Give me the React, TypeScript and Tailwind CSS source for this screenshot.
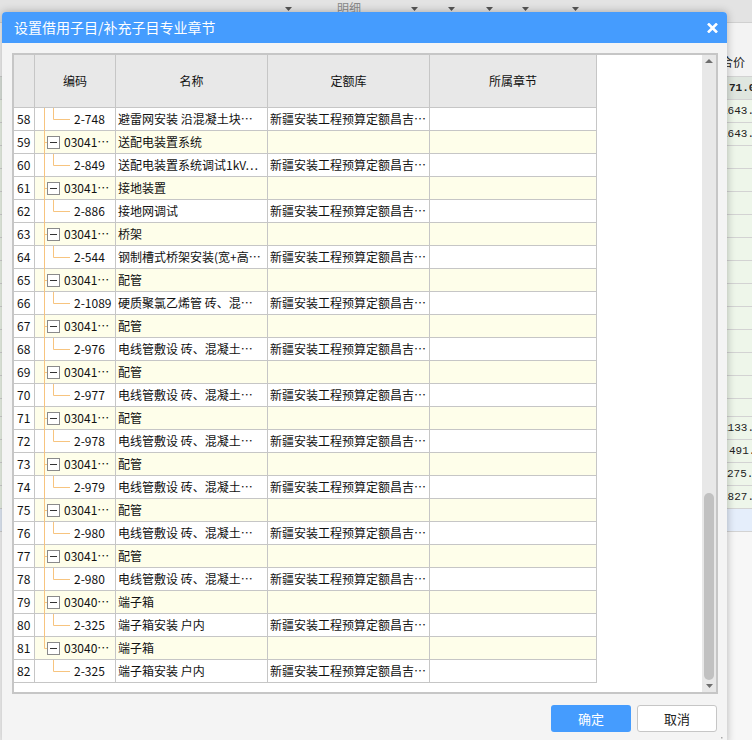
import React from "react";

// tree connector colour used by the grid
const ORANGE = "#f7c47f";
const LIB = "新疆安装工程预算定额昌吉…";

type Row = { n: number; leaf: boolean; code: string; name: string };

const rows: Row[] = [
    { n: 58, leaf: true, code: "2-748", name: "避雷网安装 沿混凝土块…" },
    { n: 59, leaf: false, code: "03041…", name: "送配电装置系统" },
    { n: 60, leaf: true, code: "2-849", name: "送配电装置系统调试1kV…" },
    { n: 61, leaf: false, code: "03041…", name: "接地装置" },
    { n: 62, leaf: true, code: "2-886", name: "接地网调试" },
    { n: 63, leaf: false, code: "03041…", name: "桥架" },
    { n: 64, leaf: true, code: "2-544", name: "钢制槽式桥架安装(宽+高…" },
    { n: 65, leaf: false, code: "03041…", name: "配管" },
    { n: 66, leaf: true, code: "2-1089", name: "硬质聚氯乙烯管 砖、混…" },
    { n: 67, leaf: false, code: "03041…", name: "配管" },
    { n: 68, leaf: true, code: "2-976", name: "电线管敷设 砖、混凝土…" },
    { n: 69, leaf: false, code: "03041…", name: "配管" },
    { n: 70, leaf: true, code: "2-977", name: "电线管敷设 砖、混凝土…" },
    { n: 71, leaf: false, code: "03041…", name: "配管" },
    { n: 72, leaf: true, code: "2-978", name: "电线管敷设 砖、混凝土…" },
    { n: 73, leaf: false, code: "03041…", name: "配管" },
    { n: 74, leaf: true, code: "2-979", name: "电线管敷设 砖、混凝土…" },
    { n: 75, leaf: false, code: "03041…", name: "配管" },
    { n: 76, leaf: true, code: "2-980", name: "电线管敷设 砖、混凝土…" },
    { n: 77, leaf: false, code: "03041…", name: "配管" },
    { n: 78, leaf: true, code: "2-980", name: "电线管敷设 砖、混凝土…" },
    { n: 79, leaf: false, code: "03040…", name: "端子箱" },
    { n: 80, leaf: true, code: "2-325", name: "端子箱安装 户内" },
    { n: 81, leaf: false, code: "03040…", name: "端子箱" },
    { n: 82, leaf: true, code: "2-325", name: "端子箱安装 户内" },
];

// rows of the page behind the dialog (only the right strip shows)
const bgRows = [
    { v: "71.00", pad: "ml-[729px] font-bold", bg: "bg-[#dfe6df]", h: "h-[23px]" },
    { v: "1643.80", pad: "ml-[721px]", bg: "bg-[#eef6ea]", h: "h-[23px]" },
    { v: "1643.80", pad: "ml-[721px]", bg: "bg-[#eef6ea]", h: "h-[23px]" },
    ...Array.from({ length: 11 }, () => ({ v: "", pad: "", bg: "bg-[#eef6ea]", h: "h-[23px]" })),
    { v: "", pad: "", bg: "bg-[#eef6ea]", h: "h-[18px]" },
    { v: "1133.00", pad: "ml-[721px]", bg: "bg-[#eef6ea]", h: "h-[23px]" },
    { v: "491.00", pad: "ml-[729px]", bg: "bg-[#eef6ea]", h: "h-[23px]" },
    { v: "275.30", pad: "ml-[727px]", bg: "bg-[#eef6ea]", h: "h-[23px]" },
    { v: "1827.50", pad: "ml-[721px]", bg: "bg-[#eef6ea]", h: "h-[23px]" },
    { v: "", pad: "", bg: "bg-[#e5eefb]", h: "h-[23px]" },
];

function TriDown({ color = "#555" }: { color?: string }) {
    return (
        <svg width="7" height="4" viewBox="0 0 7 4" className="block">
            <path d="M0 0H7L3.5 4Z" fill={color} />
        </svg>
    );
}

function TriUp({ color = "#6e6e6e" }: { color?: string }) {
    return (
        <svg width="8" height="4" viewBox="0 0 8 4" className="block">
            <path d="M0 4H8L4 0Z" fill={color} />
        </svg>
    );
}

function Tree({ leaf, trunk }: { leaf: boolean; trunk: "full" | "half" | "none" }) {
    return (
        <svg width={leaf ? 39 : 29} height="22" className="shrink-0 block" overflow="visible">
            {trunk !== "none" && (
                <line x1="9.5" y1="0" x2="9.5" y2={trunk === "full" ? 23 : 11.5} stroke={ORANGE} />
            )}
            {leaf ? (
                <path d="M18.5 0V11.5H35" fill="none" stroke={ORANGE} />
            ) : (
                <>
                    <line x1="9.5" y1="11.5" x2="12" y2="11.5" stroke={ORANGE} />
                    <rect x="12.5" y="5.5" width="12" height="12" fill="#fff" stroke="#8a8a8a" />
                    <line x1="15" y1="11.5" x2="22" y2="11.5" stroke="#333" />
                </>
            )}
        </svg>
    );
}

export default function App() {
    return (
        <div className="relative w-[752px] h-[740px] overflow-hidden bg-[#f6f6f6] font-['Noto_Sans_CJK_SC',sans-serif]">
            {/* --- Page behind the dialog --- */}
            <div className="flex flex-col w-full h-full">
                <div className="h-[23px] shrink-0 bg-[#e3e3e3] border-b border-[#d0d0d0] flex items-start text-[12px] text-[#8a8a8a]">
                    <span className="ml-[285px] mt-[7px]"><TriDown /></span>
                    <span className="ml-[45px] leading-[14px] mt-[1px] whitespace-nowrap">明细</span>
                    <span className="ml-[50px] mt-[7px]"><TriDown /></span>
                    <span className="ml-[30px] mt-[7px]"><TriDown /></span>
                    <span className="ml-[31px] mt-[7px]"><TriDown /></span>
                    <span className="ml-[29px] mt-[7px]"><TriDown /></span>
                    <span className="ml-[43px] mt-[7px]"><TriDown /></span>
                </div>
                <div className="h-[54px] shrink-0 bg-[#f3f3f3] border-b border-[#d2d2d2] flex items-end pb-[5px]">
                    <span className="ml-[721px] text-[12px] text-[#222] whitespace-nowrap">合价</span>
                </div>
                {bgRows.map((r, i) => (
                    <div
                        key={i}
                        className={`${r.h} ${r.bg} shrink-0 border-b border-[#d3d3d3] flex items-center overflow-hidden whitespace-nowrap text-[11px] text-[#222] font-['Liberation_Mono',monospace]`}
                    >
                        {r.v && <span className={r.pad}>{r.v}</span>}
                    </div>
                ))}
                <div className="flex-1 bg-[#f7f7f7]" />
            </div>

            {/* --- Dialog --- */}
            <div className="absolute left-[2px] top-[12px] w-[725px] h-[732px] flex flex-col rounded-t-[4px] bg-[#f4f4f4] shadow-[0_0_8px_rgba(0,0,0,0.28)]">
                <div className="h-[31px] shrink-0 bg-[#459cfe] rounded-t-[4px] flex items-center justify-between pl-[12px] pr-[9px]">
                    <span className="text-[14px] text-white">设置借用子目/补充子目专业章节</span>
                    <svg width="11" height="10" viewBox="0 0 11 10">
                        <path d="M1 0.5L10 9.5M10 0.5L1 9.5" stroke="#fff" strokeWidth="2.6" />
                    </svg>
                </div>

                <div className="flex flex-col pt-[10px] pl-[10px]">
                    {/* grid */}
                    <div className="w-[706px] h-[641px] border-2 border-[#c6c6c6] flex">
                        <div className="flex-1 bg-white flex flex-col text-[12px] text-[#111]">
                            <div className="flex h-[53px] shrink-0">
                                <div className="w-[21px] bg-[#e8e8e8] border-r border-b border-[#c6c6c6]" />
                                <div className="w-[81px] bg-[#e8e8e8] border-r border-b border-[#c6c6c6] flex items-center justify-center">编码</div>
                                <div className="w-[152px] bg-[#e8e8e8] border-r border-b border-[#c6c6c6] flex items-center justify-center">名称</div>
                                <div className="w-[162px] bg-[#e8e8e8] border-r border-b border-[#c6c6c6] flex items-center justify-center">定额库</div>
                                <div className="w-[167px] bg-[#e8e8e8] border-r border-b border-[#c6c6c6] flex items-center justify-center">所属章节</div>
                            </div>
                            {rows.map((r) => {
                                const bg = r.leaf ? "bg-white" : "bg-[#fefeea]";
                                const trunk = r.n === 82 ? "none" : r.n === 81 ? "half" : "full";
                                return (
                                    <div key={r.n} className="flex h-[23px] shrink-0">
                                        <div className="w-[21px] bg-white border-r border-b border-[#c6c6c6] flex items-center pl-[3px]">{r.n}</div>
                                        <div className={`w-[81px] ${bg} border-r border-b border-[#c6c6c6] flex items-center whitespace-nowrap`}>
                                            <Tree leaf={r.leaf} trunk={trunk} />
                                            <span>{r.code}</span>
                                        </div>
                                        <div className={`w-[152px] ${bg} border-r border-b border-[#c6c6c6] flex items-center pl-[2px] whitespace-nowrap overflow-hidden`}>{r.name}</div>
                                        <div className={`w-[162px] ${bg} border-r border-b border-[#c6c6c6] flex items-center pl-[2px] whitespace-nowrap overflow-hidden`}>{r.leaf ? LIB : ""}</div>
                                        <div className={`w-[167px] ${bg} border-r border-b border-[#c6c6c6]`} />
                                    </div>
                                );
                            })}
                        </div>
                        {/* scrollbar */}
                        <div className="w-[14px] shrink-0 bg-[#e8e8e8] flex flex-col items-center">
                            <div className="pt-[4px]"><TriUp /></div>
                            <div className="flex-1" />
                            <div className="w-[10px] h-[187px] rounded-full bg-[#c1c1c1]" />
                            <div className="h-[12px] pt-[4px]"><TriDown color="#6e6e6e" /></div>
                        </div>
                    </div>

                    {/* buttons */}
                    <div className="w-[705px] mt-[11px] flex justify-end gap-[6px]">
                        <button className="w-[80px] h-[27px] rounded-[3px] bg-[#459cfe] text-white text-[13px]">确定</button>
                        <button className="w-[80px] h-[27px] rounded-[3px] bg-white border border-[#c6c6c6] text-[#222] text-[13px]">取消</button>
                    </div>
                </div>

                {/* resize grip */}
                <svg width="8" height="8" viewBox="0 0 8 8" className="absolute right-[4px] bottom-[-1px]">
                    <rect x="6" y="0" width="1.5" height="1.5" fill="#a8a8a8" />
                    <rect x="3" y="3" width="1.5" height="1.5" fill="#a8a8a8" />
                    <rect x="6" y="3" width="1.5" height="1.5" fill="#a8a8a8" />
                    <rect x="0" y="6" width="1.5" height="1.5" fill="#a8a8a8" />
                    <rect x="3" y="6" width="1.5" height="1.5" fill="#a8a8a8" />
                    <rect x="6" y="6" width="1.5" height="1.5" fill="#a8a8a8" />
                </svg>
            </div>
        </div>
    );
}
